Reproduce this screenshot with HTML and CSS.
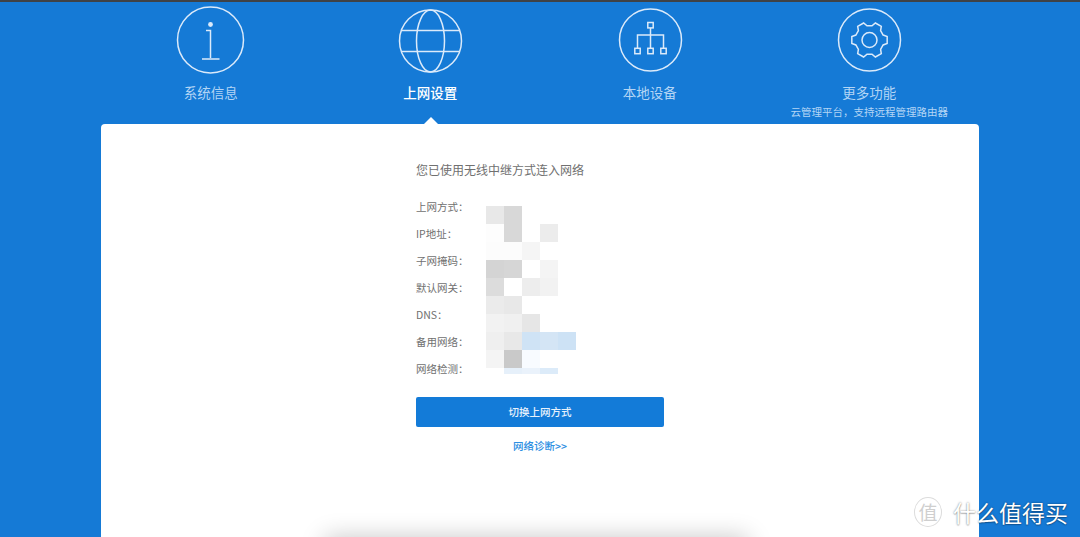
FILE: index.html
```html
<!DOCTYPE html>
<html lang="zh-CN">
<head>
    <meta charset="UTF-8">
    <title>上网设置</title>
    <link rel="stylesheet" href="styles.css">
</head>
<body>
    <div class="top-bar"></div>
    <nav class="nav">
        <div class="nav-item">
            <svg class="nav-icon" viewBox="0 0 80 80">
                <circle cx="39.500" cy="38" r="33"/>
                <circle class="solid" cx="39.500" cy="22.500" r="2.400"/>
                <path d="M35 28.500H39.500V56M31 57H48.500"/>
            </svg>
            <span class="nav-label">系统信息</span>
        </div>
        <div class="nav-item active">
            <svg class="nav-icon" viewBox="0 0 80 80">
                <circle cx="40.500" cy="39" r="31"/>
                <ellipse cx="40.500" cy="39" rx="14" ry="31"/>
                <path d="M11.500 28.500H69.500M11.500 49.500H69.500"/>
            </svg>
            <span class="nav-label">上网设置</span>
        </div>
        <div class="nav-item">
            <svg class="nav-icon" viewBox="0 0 80 80">
                <circle cx="40.500" cy="38" r="31"/>
                <rect x="37.800" y="20.500" width="5.400" height="5.400"/>
                <rect x="24.800" y="46.300" width="5.400" height="5.400"/>
                <rect x="37.800" y="46.300" width="5.400" height="5.400"/>
                <rect x="50.800" y="46.300" width="5.400" height="5.400"/>
                <path d="M40.500 26V46M27.500 46V33H53.500V46"/>
            </svg>
            <span class="nav-label">本地设备</span>
        </div>
        <div class="nav-item">
            <svg class="nav-icon" viewBox="0 0 80 80">
                <circle cx="40.500" cy="38" r="31"/>
                <g transform="translate(40.500 38)">
                    <polygon points="13.630,-4.960 17.670,-3.430 17.670,3.430 13.630,4.960 11.110,9.320 11.810,13.590 5.870,17.020 2.520,14.280 -2.520,14.280 -5.870,17.020 -11.810,13.590 -11.110,9.320 -13.630,4.960 -17.670,3.430 -17.670,-3.430 -13.630,-4.960 -11.110,-9.320 -11.810,-13.590 -5.870,-17.020 -2.520,-14.280 2.520,-14.280 5.870,-17.020 11.810,-13.590 11.110,-9.320"/>
                    <circle r="7.500"/>
                </g>
            </svg>
            <span class="nav-label">更多功能</span>
            <span class="nav-sub">云管理平台，支持远程管理路由器</span>
        </div>
    </nav>

    <main class="panel">
        <div class="status">
            <h1 class="status-title">您已使用无线中继方式连入网络</h1>
            <div class="info">
                <ul class="info-labels">
                    <li>上网方式：</li>
                    <li>IP地址：</li>
                    <li>子网掩码：</li>
                    <li>默认网关：</li>
                    <li>DNS：</li>
                    <li>备用网络：</li>
                    <li>网络检测：</li>
                </ul>
                <!-- blurred out values -->
                <svg class="mosaic" width="90" height="168" viewBox="0 0 90 168" shape-rendering="crispEdges">
                    <rect x="0" y="0" width="18" height="18" fill="#e8e8e8"/>
                    <rect x="18" y="0" width="18" height="18" fill="#d8d8d8"/>
                    <rect x="0" y="18" width="18" height="18" fill="#fdfdfd"/>
                    <rect x="18" y="18" width="18" height="18" fill="#d8d8d8"/>
                    <rect x="54" y="18" width="18" height="18" fill="#ececec"/>
                    <rect x="0" y="36" width="18" height="18" fill="#fcfcfc"/>
                    <rect x="18" y="36" width="18" height="18" fill="#fcfcfc"/>
                    <rect x="36" y="36" width="18" height="18" fill="#f5f5f5"/>
                    <rect x="0" y="54" width="18" height="18" fill="#d4d4d4"/>
                    <rect x="18" y="54" width="18" height="18" fill="#d6d6d6"/>
                    <rect x="54" y="54" width="18" height="18" fill="#f4f4f4"/>
                    <rect x="0" y="72" width="18" height="18" fill="#dcdcdc"/>
                    <rect x="36" y="72" width="18" height="18" fill="#ededed"/>
                    <rect x="54" y="72" width="18" height="18" fill="#f2f2f2"/>
                    <rect x="0" y="90" width="18" height="18" fill="#ebebeb"/>
                    <rect x="18" y="90" width="18" height="18" fill="#e8e8e8"/>
                    <rect x="0" y="108" width="18" height="18" fill="#f2f2f2"/>
                    <rect x="18" y="108" width="18" height="18" fill="#f0f0f0"/>
                    <rect x="36" y="108" width="18" height="18" fill="#e6e6e6"/>
                    <rect x="0" y="126" width="18" height="18" fill="#efefef"/>
                    <rect x="18" y="126" width="18" height="18" fill="#e8e8e8"/>
                    <rect x="36" y="126" width="18" height="18" fill="#cfe3f5"/>
                    <rect x="54" y="126" width="18" height="18" fill="#d4e5f5"/>
                    <rect x="72" y="126" width="18" height="18" fill="#cde2f5"/>
                    <rect x="0" y="144" width="18" height="18" fill="#f4f4f4"/>
                    <rect x="18" y="144" width="18" height="18" fill="#c9c9c9"/>
                    <rect x="36" y="144" width="18" height="18" fill="#f8fbff"/>
                    <rect x="18" y="162" width="18" height="6" fill="#e6f0fa"/>
                    <rect x="36" y="162" width="18" height="6" fill="#eaf2fb"/>
                    <rect x="54" y="162" width="18" height="6" fill="#dcebf9"/>
                </svg>
            </div>
            <button class="switch-btn">切换上网方式</button>
            <a class="diag-link" href="#">网络诊断&gt;&gt;</a>
        </div>
        <div class="panel-shadow"></div>
    </main>

    <div class="watermark">
        <span class="watermark-logo">值</span>
        <span class="watermark-text">什么值得买</span>
    </div>
</body>
</html>
```

FILE: styles.css
```css
html, body {
    height: 100%;
}

body {
    margin: 0;
    display: flex;
    flex-direction: column;
    overflow: hidden;
    position: relative;
    background-color: #157ad6;
    font-family: "Noto Sans CJK SC", "Liberation Sans", sans-serif;
}

.top-bar {
    height: 2px;
    background-color: #3f4246;
}

.nav {
    display: flex;
    height: 122px;
    margin: 0 101px;
}

.nav-item {
    flex: 1;
    position: relative;
    display: flex;
    flex-direction: column;
    align-items: center;
    color: #b3d5f5;
}

.nav-icon {
    width: 80px;
    height: 80px;
    fill: none;
    stroke: #dbeafa;
    stroke-width: 1.5;
}

.nav-icon .solid {
    fill: #dbeafa;
    stroke: none;
}

.nav-label {
    font-size: 13.500px;
    line-height: 20px;
}

.nav-sub {
    margin-top: 2px;
    font-size: 10.500px;
    line-height: 16px;
    white-space: nowrap;
}

.active {
    color: #fff;
}

.active .nav-label {
    font-weight: 500;
}

.active::after {
    content: "";
    position: absolute;
    left: 50%;
    bottom: 0;
    margin-left: -6px;
    border-left: 7px solid transparent;
    border-right: 7px solid transparent;
    border-bottom: 7px solid #fff;
}

.panel {
    flex: 1;
    position: relative;
    margin: 0 101px;
    padding: 0 315px;
    background-color: #fff;
    border-radius: 4px 4px 0 0;
}

.status-title {
    margin: 36px 0 0;
    font-size: 12px;
    line-height: 20px;
    font-weight: 400;
    color: #707070;
    white-space: nowrap;
}

.info {
    display: flex;
    margin-top: 19px;
}

.info-labels {
    width: 70px;
    margin: 0;
    padding: 0;
    list-style: none;
    font-size: 10.500px;
    color: #707070;
}

.info-labels li {
    height: 27px;
    line-height: 16px;
    white-space: nowrap;
}

.mosaic {
    display: block;
    flex-shrink: 0;
    margin-top: 7px;
}

.switch-btn {
    display: block;
    width: 248px;
    height: 30px;
    margin-top: 9px;
    padding: 0 0 2px;
    border: none;
    border-radius: 2px;
    background-color: #137bd8;
    color: #e8f2fc;
    font-family: inherit;
    font-size: 10.500px;
    font-weight: 500;
}

.diag-link {
    display: block;
    width: 248px;
    margin-top: 11px;
    font-size: 10.500px;
    font-weight: 500;
    line-height: 16px;
    text-align: center;
    color: #2e8fe2;
    text-decoration: none;
}

.panel-shadow {
    position: absolute;
    left: 228px;
    bottom: -24px;
    width: 415px;
    height: 20px;
    box-shadow: 0 0 24px 4px rgba(0, 0, 0, 0.22);
}

.watermark {
    position: absolute;
    right: 12px;
    bottom: 10px;
    display: flex;
    align-items: center;
    gap: 11px;
}

.watermark-logo {
    width: 26px;
    height: 28px;
    border: 1.500px solid #dcdcdc;
    border-radius: 50%;
    font-size: 19px;
    line-height: 27px;
    text-align: center;
    color: #cfcfcf;
}

.watermark-text {
    font-size: 23px;
    line-height: 30px;
    color: #fff;
    text-shadow: 0 0 2px rgba(0, 0, 0, 0.5), 0 1px 1px rgba(0, 0, 0, 0.2);
    white-space: nowrap;
}
```
